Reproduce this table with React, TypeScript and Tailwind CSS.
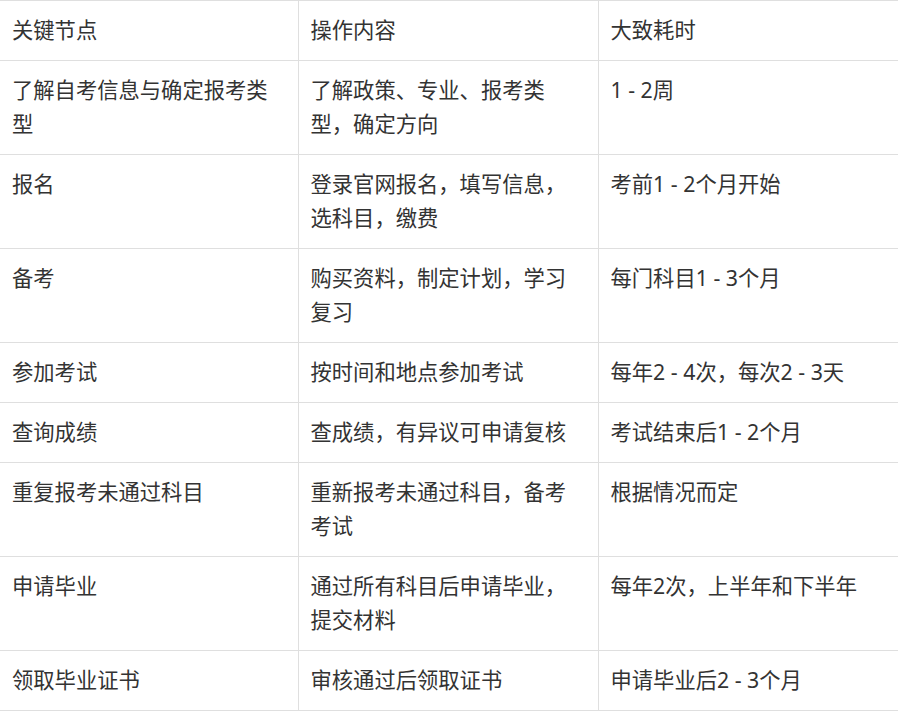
import React from "react";

const rows: string[][] = [
  ["了解自考信息与确定报考类型", "了解政策、专业、报考类型，确定方向", "1 - 2周"],
  ["报名", "登录官网报名，填写信息，选科目，缴费", "考前1 - 2个月开始"],
  ["备考", "购买资料，制定计划，学习复习", "每门科目1 - 3个月"],
  ["参加考试", "按时间和地点参加考试", "每年2 - 4次，每次2 - 3天"],
  ["查询成绩", "查成绩，有异议可申请复核", "考试结束后1 - 2个月"],
  ["重复报考未通过科目", "重新报考未通过科目，备考考试", "根据情况而定"],
  ["申请毕业", "通过所有科目后申请毕业，提交材料", "每年2次，上半年和下半年"],
  ["领取毕业证书", "审核通过后领取证书", "申请毕业后2 - 3个月"],
];

const cell =
  "align-top pl-3 pr-3 pt-3 pb-[13px] text-left font-normal border-b border-[#dfdfdf]";

export default function App() {
  return (
    <div
      className="w-[898px] overflow-hidden bg-white text-[#333] text-[21.3px] leading-[34px]"
      style={{ fontFamily: '"Noto Sans", "Noto Sans CJK SC", sans-serif' }}
    >
      <table className="w-[898px] table-fixed border-collapse">
        <colgroup>
          <col className="w-[298px]" />
          <col className="w-[300px]" />
          <col className="w-[300px]" />
        </colgroup>
        <thead>
          <tr className="border-t border-[#dfdfdf]">
            <th className={`${cell} border-r`}>关键节点</th>
            <th className={`${cell} border-r`}>操作内容</th>
            <th className={cell}>大致耗时</th>
          </tr>
        </thead>
        <tbody>
          {rows.map((r, i) => (
            <tr key={i}>
              <td className={`${cell} border-r`}>{r[0]}</td>
              <td className={`${cell} border-r`}>{r[1]}</td>
              <td className={cell}>{r[2]}</td>
            </tr>
          ))}
        </tbody>
      </table>
    </div>
  );
}
